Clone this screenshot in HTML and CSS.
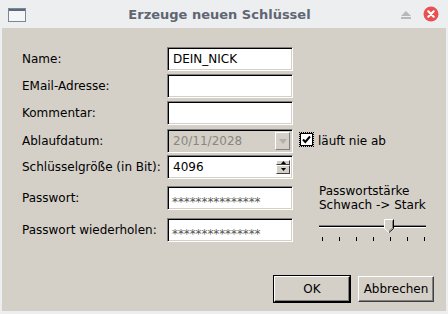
FILE: index.html
```html
<!DOCTYPE html>
<html lang="de">
<head>
  <meta charset="UTF-8">
  <title>Erzeuge neuen Schlüssel</title>
  <link rel="stylesheet" href="styles.css">
</head>
<body>
  <div class="fenster">
    <div class="titelleiste">
      <svg class="fenster-icon" width="18" height="14" viewBox="0 0 18 14">
        <rect x="0.5" y="0.5" width="17" height="13" fill="#f4f6f8" stroke="#7c8796"/>
        <rect x="1" y="1" width="16" height="2" fill="#5d6a7d"/>
      </svg>
      <span class="titel">Erzeuge neuen Schlüssel</span>
      <svg class="btn-max" width="10" height="8" viewBox="0 0 10 8">
        <polygon points="5,0 10,5 0,5" fill="#b5b9be"/>
        <rect x="0" y="6" width="10" height="2" fill="#b5b9be"/>
      </svg>
      <svg class="btn-close" width="16" height="16" viewBox="0 0 16 16">
        <circle cx="8" cy="8" r="7.5" fill="#e8514f"/>
        <path d="M5.3 5.3 L10.7 10.7 M10.7 5.3 L5.3 10.7" stroke="#fff" stroke-width="2.2" stroke-linecap="round"/>
      </svg>
    </div>

    <div class="inhalt">
      <div class="formular">
        <label class="etikett">Name:</label>
        <div class="feld">DEIN_NICK</div>
        <div></div>

        <label class="etikett">EMail-Adresse:</label>
        <div class="feld"></div>
        <div></div>

        <label class="etikett">Kommentar:</label>
        <div class="feld"></div>
        <div></div>

        <label class="etikett">Ablaufdatum:</label>
        <div class="feld deaktiviert">
          <span>20/11/2028</span>
          <span class="drop-knopf">
            <svg width="8" height="5" viewBox="0 0 8 5"><polygon points="0,0 8,0 4,5" fill="#b4b0a8"/></svg>
          </span>
        </div>
        <div class="checkzeile">
          <span class="checkbox">
            <svg width="11" height="11" viewBox="0 0 11 11"><path d="M2 5.5 L4.3 8 L9 2.5" stroke="#000" stroke-width="2" fill="none"/></svg>
          </span>
          <span>läuft nie ab</span>
        </div>

        <label class="etikett">Schlüsselgröße (in Bit):</label>
        <div class="feld">
          <span>4096</span>
          <span class="spin">
            <span class="spin-knopf"><svg width="5" height="3" viewBox="0 0 5 3"><polygon points="2.5,0 5,3 0,3" fill="#000"/></svg></span>
            <span class="spin-knopf"><svg width="5" height="3" viewBox="0 0 5 3"><polygon points="0,0 5,0 2.5,3" fill="#000"/></svg></span>
          </span>
        </div>
        <div></div>

        <label class="etikett">Passwort:</label>
        <div class="feld passwort">***************</div>
        <div class="staerke">
          <div>Passwortstärke</div>
          <div>Schwach -&gt; Stark</div>
          <div class="regler">
            <div class="regler-linie"></div>
            <svg class="regler-griff" width="10" height="14" viewBox="0 0 10 14">
              <polygon points="0.5,0.5 9.5,0.5 9.5,9.5 5,13.5 0.5,9.5" fill="#d4d0c8" stroke="#fff"/>
              <polyline points="9.5,0.5 9.5,9.5 5,13.5" fill="none" stroke="#000"/>
              <polyline points="8.5,1.5 8.5,9 5,12.3" fill="none" stroke="#808080"/>
            </svg>
          </div>
          <div class="ticks">
            <span></span><span></span><span></span><span></span><span></span><span></span><span></span>
          </div>
        </div>

        <label class="etikett">Passwort wiederholen:</label>
        <div class="feld passwort">***************</div>
      </div>

      <div class="knoepfe">
        <button class="knopf standard">OK</button>
        <button class="knopf">Abbrechen</button>
      </div>
    </div>
  </div>
</body>
</html>
```

FILE: styles.css
```css
body {
  margin: 0;
  font-family: "DejaVu Sans", sans-serif;
  font-size: 12px;
  color: #000;
  background-color: #eceef0;
}
.fenster {
  width: 448px;
  height: 314px;
  display: flex;
  flex-direction: column;
  background-color: #eceef0;
}
.titelleiste {
  height: 28px;
  display: flex;
  align-items: center;
  padding: 0 9px 0 8px;
  position: relative;
}
.fenster-icon {
  margin-top: 1px;
}
.titel {
  flex: 1;
  text-align: center;
  font-weight: bold;
  font-size: 13px;
  color: #5f6572;
  margin-left: 12px;
}
.btn-max {
  margin-right: 12px;
  margin-top: 1px;
}
.inhalt {
  flex: 1;
  margin: 0 2px 3px 2px;
  background-color: #d4d0c8;
  display: flex;
  flex-direction: column;
  padding: 19px 12px 0 20px;
}
.formular {
  display: grid;
  grid-template-columns: 145px 126px auto;
  grid-template-rows: 27px 27px 28px 26px 31px 32px 24px;
  align-items: start;
}
.etikett {
  line-height: 24px;
  white-space: nowrap;
}
.feld {
  height: 24px;
  box-sizing: border-box;
  background-color: #fff;
  border-top: 1px solid #808080;
  border-left: 1px solid #808080;
  border-right: 1px solid #fff;
  border-bottom: 1px solid #fff;
  box-shadow: inset 1px 1px 0 #000, inset -1px -1px 0 #d4d0c8;
  padding: 0 3px 0 5px;
  display: flex;
  align-items: center;
  font-size: 12px;
}
.feld span:first-child {
  flex: 1;
}
.deaktiviert {
  background-color: #d4d0c8;
  color: #8a8680;
}
.drop-knopf {
  width: 15px;
  height: 18px;
  box-sizing: border-box;
  border: 1px solid;
  border-color: #fff #808080 #808080 #fff;
  display: flex;
  align-items: center;
  justify-content: center;
  margin-right: -1px;
}
.spin {
  display: flex;
  flex-direction: column;
  margin-right: -1px;
}
.spin-knopf {
  width: 14px;
  height: 9px;
  box-sizing: border-box;
  background-color: #d4d0c8;
  border: 1px solid;
  border-color: #fff #404040 #404040 #fff;
  display: flex;
  align-items: center;
  justify-content: center;
}
.passwort {
  font-size: 12px;
  letter-spacing: -0.1px;
  color: #555;
  padding-top: 7px;
  padding-left: 4px;
}
.checkzeile {
  display: flex;
  align-items: center;
  height: 24px;
  margin-left: 7px;
  gap: 5px;
}
.checkbox {
  width: 13px;
  height: 13px;
  box-sizing: border-box;
  background-color: #fff;
  border: 1px solid #000;
  outline: 1px dotted #000;
  display: flex;
  align-items: center;
  justify-content: center;
  margin-top: -3px;
}
.staerke {
  grid-row: span 2;
  margin-left: 26px;
  margin-top: -2px;
  line-height: 14px;
}
.regler {
  position: relative;
  width: 107px;
  height: 14px;
  margin-top: 7px;
}
.regler-linie {
  position: absolute;
  left: 0;
  right: 0;
  top: 6px;
  height: 1px;
  background-color: #000;
  border-top: 1px solid #808080;
  border-bottom: 1px solid #fff;
}
.regler-griff {
  position: absolute;
  left: 65px;
  top: 0;
}
.ticks {
  width: 103px;
  display: flex;
  justify-content: space-between;
  margin: 4px 0 0 3px;
}
.ticks span {
  width: 1px;
  height: 4px;
  background-color: #000;
}
.knoepfe {
  display: flex;
  justify-content: flex-end;
  gap: 8px;
  margin-top: 34px;
}
.knopf {
  width: 76px;
  height: 26px;
  box-sizing: border-box;
  font-family: "DejaVu Sans", sans-serif;
  font-size: 12px;
  color: #000;
  background-color: #d4d0c8;
  border: 1px solid;
  border-color: #fff #404040 #404040 #fff;
  box-shadow: inset -1px -1px 0 #808080;
  padding: 0;
}
.standard {
  outline: 1px solid #000;
  outline-offset: 0;
  border-color: #fff #000 #000 #fff;
  box-shadow: inset -1px -1px 0 #808080, 1px 1px 0 #000;
}
```
